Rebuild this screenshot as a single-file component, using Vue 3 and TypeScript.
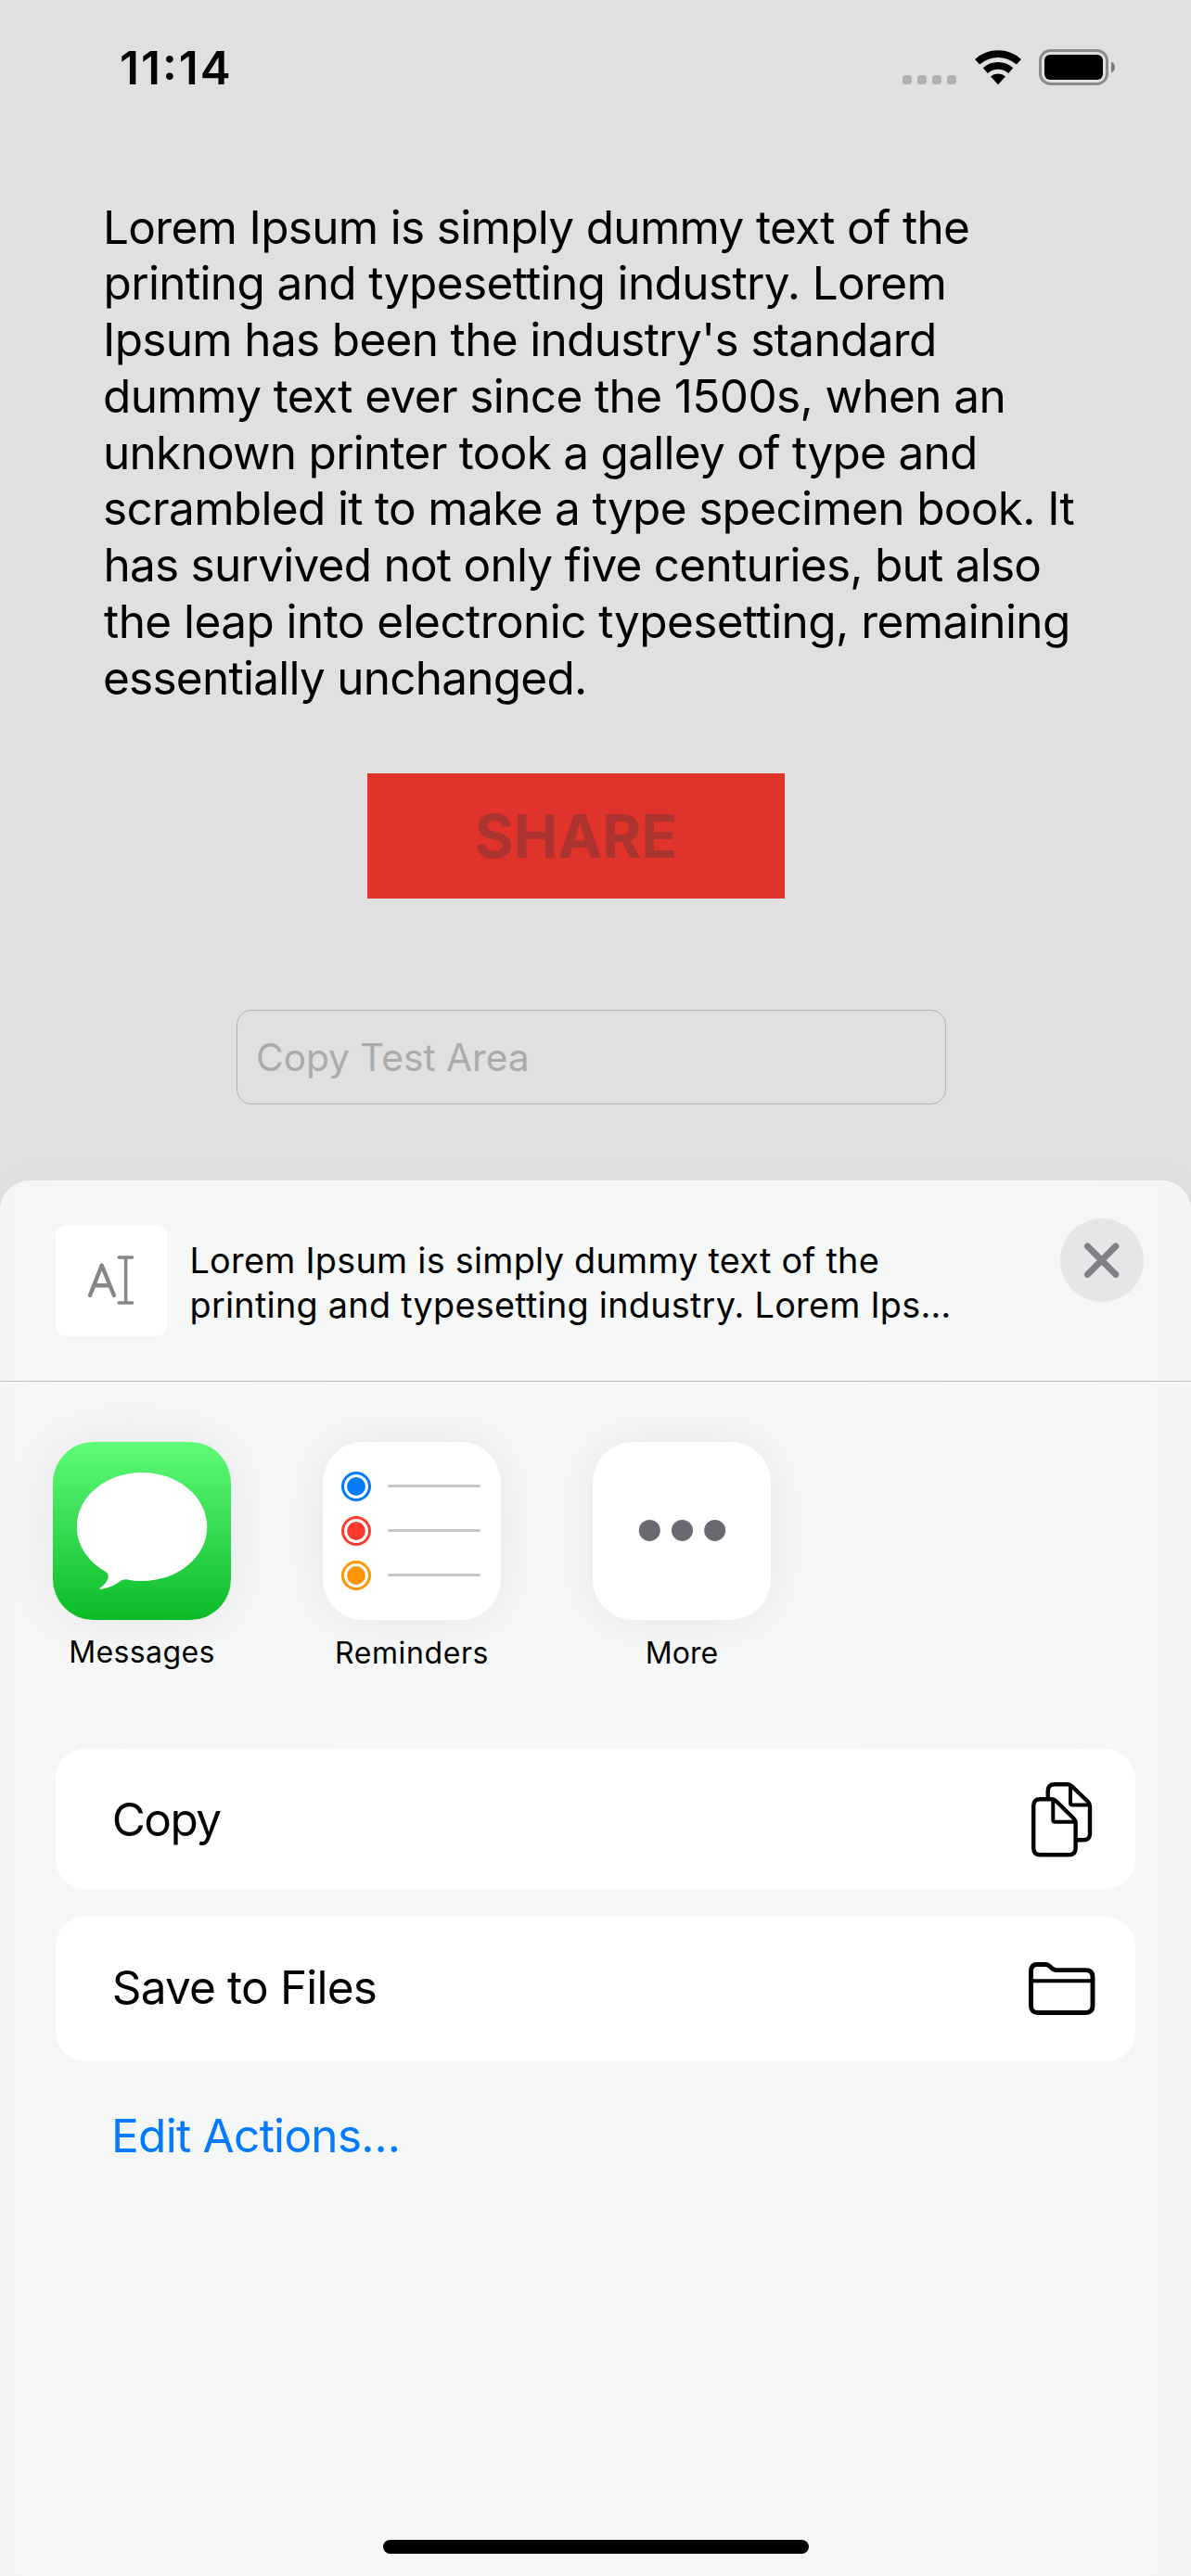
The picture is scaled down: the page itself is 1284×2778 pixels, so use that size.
<script setup lang="ts">
interface Line {
  text: string
  tracking: number
  indent: number
}

// Body copy is broken by hand so every line keeps its own tracking.
const paragraph: Line[] = [
  { text: 'Lorem Ipsum is simply dummy text of the', tracking: -0.683, indent: 0 },
  { text: 'printing and typesetting industry. Lorem', tracking: -0.627, indent: 0.5 },
  { text: "Ipsum has been the industry's standard", tracking: -0.665, indent: 0 },
  { text: 'dummy text ever since the 1500s, when an', tracking: -0.61, indent: 0 },
  { text: 'unknown printer took a galley of type and', tracking: -0.729, indent: 0 },
  { text: 'scrambled it to make a type specimen book. It', tracking: -0.665, indent: 0 },
  { text: 'has survived not only five centuries, but also', tracking: -0.75, indent: 0.5 },
  { text: 'the leap into electronic typesetting, remaining', tracking: -0.557, indent: 1 },
  { text: 'essentially unchanged.', tracking: -0.752, indent: 0 },
]

const summary = [
  'Lorem Ipsum is simply dummy text of the',
  'printing and typesetting industry. Lorem Ips…',
]

const reminders = [
  { color: '#007aff', y: 48 },
  { color: '#ff3b30', y: 96 },
  { color: '#ff9500', y: 144 },
]
</script>

<template>
  <div class="screen">
    <section class="backdrop">
      <header class="status">
        <span class="time">11:14</span>
        <div class="indicators">
          <div class="cell"><i v-for="n in 4" :key="n" /></div>
          <svg class="wifi" width="52" height="38" viewBox="0 0 52 38" fill="none" stroke="#000" stroke-width="7.6">
            <path d="M3.6 12.8A33.2 33.2 0 0 1 48.4 12.8" />
            <path d="M12.3 22.1A20.5 20.5 0 0 1 39.7 22.1" />
            <path d="M26 37.2L18 28.5A12 12 0 0 1 34 28.5Z" fill="#000" stroke="none" />
          </svg>
          <svg class="battery" width="83" height="39" viewBox="0 0 83 39">
            <rect x="1.5" y="1.5" width="72" height="36" rx="11" fill="none" stroke="#8b8b8b" stroke-width="3" />
            <rect x="6" y="6" width="63" height="27" rx="6" fill="#000" />
            <path d="M78 13.5C80.7 14.6 82 16.9 82 19.5S80.7 24.4 78 25.5Z" fill="#7c7c7c" />
          </svg>
        </div>
      </header>

      <p class="body">
        <span
          v-for="line in paragraph"
          :key="line.text"
          :style="{ letterSpacing: line.tracking + 'px', paddingLeft: line.indent + 'px' }"
        >{{ line.text }}</span>
      </p>

      <button class="share" type="button">SHARE</button>
      <div class="field">Copy Test Area</div>
    </section>

    <section class="sheet">
      <header class="sheet-head">
        <div class="thumb">
          <svg width="50" height="54" viewBox="0 0 50 54" fill="none" stroke="#868686" stroke-linecap="round" stroke-linejoin="round">
            <path d="M3 43L15.7 10.500L28.900 43M7.200 32.200H24.400" stroke-width="4.400" />
            <path d="M34.200 1.900H48.500M34.200 50.900H48.500M41.600 1.900V50.900" stroke-width="3.500" />
          </svg>
        </div>
        <div class="summary">
          <span v-for="line in summary" :key="line">{{ line }}</span>
        </div>
        <button class="close" type="button" aria-label="Close">
          <svg width="90" height="90" viewBox="0 0 90 90" fill="none" stroke="#818185" stroke-width="7" stroke-linecap="round">
            <path d="M29.500 30L59.800 60.400M59.800 30L29.500 60.400" />
          </svg>
        </button>
      </header>

      <div class="apps">
        <div class="app raised">
          <svg width="192" height="192" viewBox="0 0 192 192">
            <defs>
              <linearGradient id="msg" x1="0" y1="0" x2="0" y2="1">
                <stop offset="0" stop-color="#5ffb79" />
                <stop offset="1" stop-color="#0abb27" />
              </linearGradient>
            </defs>
            <rect width="192" height="192" fill="url(#msg)" />
            <path
              d="M96 33C57.1 33 25.8 59.2 25.8 91.5C25.8 111.5 37.5 128.5 57 140C59.7 142 60.3 144 59.5 147C58 151.5 54.5 155 50.7 157.5C49.8 158.7 50.5 159 52 158.8C60 157.6 66.5 154.5 72 150.8C75 148.7 77 148 80.5 148.5C85.5 149.5 90.5 150 96 150C134.9 150 166.3 123.8 166.3 91.5S134.9 33 96 33Z"
              fill="#fff"
            />
          </svg>
          <span class="wide-1">Messages</span>
        </div>
        <div class="app">
          <svg width="192" height="192" viewBox="0 0 192 192">
            <rect width="192" height="192" fill="#fff" />
            <g v-for="item in reminders" :key="item.color">
              <circle cx="36" :cy="item.y" r="14.5" fill="none" :stroke="item.color" stroke-width="3" />
              <circle cx="36" :cy="item.y" r="9.9" :fill="item.color" />
              <path :d="`M71.500 ${item.y - 0.5}H168.500`" stroke="#c6c6c8" stroke-width="3" stroke-linecap="round" />
            </g>
          </svg>
          <span class="wide-2">Reminders</span>
        </div>
        <div class="app">
          <svg width="192" height="192" viewBox="0 0 192 192" fill="#696972">
            <rect width="192" height="192" fill="#fff" />
            <circle cx="61.3" cy="95.4" r="11.5" />
            <circle cx="96.5" cy="95.4" r="11.5" />
            <circle cx="131.700" cy="95.4" r="11.5" />
          </svg>
          <span>More</span>
        </div>
      </div>

      <div class="action copy">
        <span>Copy</span>
        <svg class="docs" width="66" height="81" viewBox="0 0 66 81" fill="none" stroke="#000" stroke-width="4.400" stroke-linejoin="round">
          <path d="M17.700 18V9.500Q17.700 2.200 25 2.200H38.500Q41.500 2.200 43.500 4.200L61 21Q63 23 63 26V55.500Q63 62.300 56 62.300H49" />
          <path d="M42 3V22.500Q42 24.500 44 24.500H62" stroke-width="4" />
          <path d="M2.200 25.500Q2.200 18.200 9.500 18.200H21.500Q24.500 18.200 26.500 20.200L45.500 39Q47.600 41.200 47.600 44V71Q47.600 78.300 40.300 78.300H9.500Q2.200 78.300 2.200 71Z" />
          <path d="M23.300 19V40.800Q23.300 42.800 25.300 42.800H46.500" stroke-width="4" />
        </svg>
      </div>
      <div class="action save">
        <span>Save to Files</span>
        <svg class="folder" width="72" height="58" viewBox="0 0 72 58" fill="none" stroke="#000" stroke-width="4.900" stroke-linejoin="round">
          <path d="M2.500 10Q2.500 2.500 9.500 2.500H17.500Q20.500 2.500 22.500 4.300L25.500 7Q27.500 8.600 30 8.600H61.500Q69 8.600 69 16V47Q69 54.500 61.500 54.500H9.900Q2.500 54.500 2.500 47Z" />
          <path d="M3 20.200H68.500" stroke-width="4" />
        </svg>
      </div>
      <div class="edit">Edit Actions…</div>

      <div class="home" />
    </section>
  </div>
</template>

<style>
body {
  background: #e0e0e0;
}
</style>

<style scoped>
.screen {
  width: 1284px;
  height: 2778px;
  display: flex;
  flex-direction: column;
  overflow: hidden;
  background: #e0e0e0;
  color: #000;
  font-family: Inter, "Liberation Sans", sans-serif;
}

button {
  border: 0;
  padding: 0;
  font-family: inherit;
}

svg {
  display: block;
}

.backdrop {
  height: 1273px;
  display: flex;
  flex-direction: column;
}

.status {
  height: 146px;
  padding: 0 82px 0 129px;
  display: flex;
  justify-content: space-between;
}

.time {
  font-size: 49.5px;
  line-height: 146px;
  font-weight: 600;
  letter-spacing: 2.03px;
  font-feature-settings: "calt" 1, "case" 1;
}

.indicators {
  display: flex;
  align-items: flex-start;
  padding-top: 53px;
}

.cell {
  display: flex;
  gap: 6px;
  margin: 28px 19px 0 0;
}

.cell i {
  width: 10px;
  height: 10px;
  border-radius: 3px;
  background: #b1b1b1;
}

.wifi {
  margin: 1px 18px 0 0;
}

.battery {
  margin-right: -1px;
}

.body {
  margin: 68.5px 0 0;
  padding-left: 111px;
  font-size: 49.5px;
  line-height: 60.75px;
  height: 547.5px;
}

.body span {
  display: block;
  white-space: nowrap;
}

.share {
  width: 450px;
  height: 135px;
  margin: 72px 0 0 396px;
  background: #e0332a;
  color: #ab3330;
  font-size: 64px;
  line-height: 78px;
  font-weight: 700;
}

.field {
  box-sizing: border-box;
  width: 765px;
  height: 102px;
  margin: 120px 0 0 255px;
  padding-left: 20px;
  border: 1px solid #b5b5b6;
  border-radius: 16px;
  color: #ababac;
  font-size: 40.7px;
  line-height: 102px;
  letter-spacing: -0.055px;
}

.sheet {
  flex: 1;
  display: flex;
  flex-direction: column;
  border-radius: 32px 32px 0 0;
  background: linear-gradient(90deg, #f6f5f5, #f5f7f6 9%, #f6f8f7 30%, #f6f8f7 70%, #f5f6f6 92%, #f6f5f5);
  box-shadow: 0 0 60px rgba(0, 0, 0, 0.02);
}

.sheet-head {
  box-sizing: border-box;
  height: 217px;
  padding: 0 51px 0 60px;
  display: flex;
  align-items: flex-start;
  border-bottom: 1px solid #bfc1c0;
}

.thumb {
  width: 120px;
  height: 120px;
  margin-top: 48px;
  border-radius: 12px;
  background: #fff;
}

.thumb svg {
  margin: 33px 0 0 34px;
}

.summary {
  flex: 1;
  display: flex;
  flex-direction: column;
  margin: 61.500px 0 0 24.500px;
  font-size: 37.8px;
  line-height: 48px;
  letter-spacing: 0.25px;
  white-space: nowrap;
}

.close {
  width: 90px;
  height: 90px;
  margin-top: 41px;
  border-radius: 50%;
  background: #e6e6e8;
}

.apps {
  height: 396px;
  box-sizing: border-box;
  padding: 65px 0 0 57px;
  display: flex;
  gap: 99px;
}

.app {
  width: 192px;
  display: flex;
  flex-direction: column;
  align-items: center;
  font-size: 32px;
  line-height: 40px;
}

.app svg {
  border-radius: 44px;
  box-shadow: 0 0 54px rgba(0, 0, 0, 0.07);
}

.app span {
  margin-top: 16px;
}

.app.raised span {
  margin-top: 15px;
}

.app .wide-1 {
  letter-spacing: 0.37px;
}

.app .wide-2 {
  letter-spacing: 0.6px;
}

.action {
  display: flex;
  align-items: center;
  justify-content: space-between;
  box-sizing: border-box;
  margin: 0 60px;
  padding-left: 60.7px;
  border-radius: 32px;
  background: #fff;
  font-size: 49.5px;
  letter-spacing: -0.82px;
}

.copy {
  height: 151px;
  padding-right: 46px;
  letter-spacing: -1.5px;
}

.docs {
  margin-top: 1px;
}

.save {
  height: 156px;
  margin-top: 30px;
  padding-right: 43px;
}

.save span {
  padding-bottom: 4px;
}

.edit {
  padding-left: 120px;
  color: #007aff;
  font-size: 49.5px;
  line-height: 160px;
  letter-spacing: -0.71px;
}

.home {
  width: 459px;
  height: 15px;
  margin: auto 0 24px 413px;
  border-radius: 8px;
  background: #000;
}
</style>
